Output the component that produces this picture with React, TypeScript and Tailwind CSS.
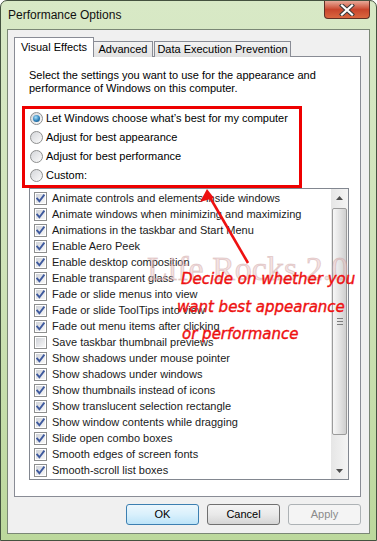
import React from 'react';

const effects: [string, boolean][] = [
  ['Animate controls and elements inside windows', true],
  ['Animate windows when minimizing and maximizing', true],
  ['Animations in the taskbar and Start Menu', true],
  ['Enable Aero Peek', true],
  ['Enable desktop composition', true],
  ['Enable transparent glass', true],
  ['Fade or slide menus into view', true],
  ['Fade or slide ToolTips into view', true],
  ['Fade out menu items after clicking', true],
  ['Save taskbar thumbnail previews', false],
  ['Show shadows under mouse pointer', true],
  ['Show shadows under windows', true],
  ['Show thumbnails instead of icons', true],
  ['Show translucent selection rectangle', true],
  ['Show window contents while dragging', true],
  ['Slide open combo boxes', true],
  ['Smooth edges of screen fonts', true],
  ['Smooth-scroll list boxes', true],
];

const radios = [
  'Let Windows choose what\u2019s best for my computer',
  'Adjust for best appearance',
  'Adjust for best performance',
  'Custom:',
];

const Checkbox = ({ checked }: { checked: boolean }) => (
  <span className="relative w-[13px] h-[13px] shrink-0 border border-[#8e8f8f] bg-white p-[1px]">
    <span className="block w-full h-full bg-gradient-to-br from-[#cfd2d8] to-[#f8f8f8]" />
    {checked && (
      <svg viewBox="0 0 11 11" className="absolute left-0 top-0 w-[11px] h-[11px]">
        <path d="M2.2 5.6 L4.4 8.2 L8.8 2.4" stroke="#3f5a9e" strokeWidth="1.9" fill="none" strokeLinecap="square" />
      </svg>
    )}
  </span>
);

const Radio = ({ selected }: { selected: boolean }) => (
  <span className="w-[13px] h-[13px] shrink-0 rounded-full border border-[#8e8f8f] bg-gradient-to-br from-[#d4d6da] to-[#fbfbfb] flex items-center justify-center">
    {selected && (
      <span className="w-[7px] h-[7px] rounded-full bg-[radial-gradient(circle_at_40%_35%,#a7e0fb,#2c7fb8_55%,#17466f)]" />
    )}
  </span>
);

const Scrollbar = () => (
  <div className="w-[17px] h-full flex flex-col bg-gradient-to-r from-[#e6e6e6] to-[#f4f4f4]">
    <div className="h-[17px] flex items-center justify-center">
      <svg width="7" height="4" viewBox="0 0 7 4"><path d="M0 4 L3.5 0 L7 4 Z" fill="#4d4d4d" /></svg>
    </div>
    <div className="mt-[2px] mx-[1px] h-[227px] rounded-[2px] border border-[#9b9b9b] bg-gradient-to-r from-[#f7f7f7] via-[#e4e4e4] to-[#cfcfcf] flex flex-col items-center justify-center gap-[2px]">
      <span className="w-[6px] h-[1px] bg-[#7d7d7d]" />
      <span className="w-[6px] h-[1px] bg-[#7d7d7d]" />
      <span className="w-[6px] h-[1px] bg-[#7d7d7d]" />
    </div>
    <div className="flex-1" />
    <div className="h-[17px] flex items-center justify-center">
      <svg width="7" height="4" viewBox="0 0 7 4"><path d="M0 0 L7 0 L3.5 4 Z" fill="#4d4d4d" /></svg>
    </div>
  </div>
);

export default function App() {
  return (
    <div className="relative w-[377px] h-[541px] overflow-hidden rounded-t-[7px] border border-[#44523f] bg-gradient-to-b from-[#d8e9c6] via-[#cfe3b8] to-[#bcd89c] font-['Liberation_Sans',Arial,sans-serif] text-[11px] text-black">
      {/* Title bar */}
      <div className="h-[28px] flex justify-between pl-[7px] pr-[6px]">
        <span className="pt-[7px] leading-[15px] text-[12px] text-[#111]">Performance Options</span>
        <button className="mt-0 w-[46px] h-[18px] rounded-b-[4px] border border-t-0 border-[#5e3026] bg-gradient-to-b from-[#e6a898] via-[#c8452c] to-[#d9663f] flex items-center justify-center">
          <svg width="16" height="12" viewBox="0 0 16 12">
            <path d="M3 1.5 L13 10.5 M13 1.5 L3 10.5" stroke="#3b3b3b" strokeWidth="4.2" strokeLinecap="square" />
            <path d="M3 1.5 L13 10.5 M13 1.5 L3 10.5" stroke="#ffffff" strokeWidth="2.2" strokeLinecap="square" />
          </svg>
        </button>
      </div>

      {/* Client area */}
      <div className="mx-[6px] h-[505px] border border-[#7a8775] bg-[#f0f0f0] pl-[6px] pr-[8px] pt-[7px]">
        {/* Tabs */}
        <div className="flex items-end h-[20px]">
          <div className="relative z-10 w-[80px] h-[20px] border border-b-0 border-[#898c95] bg-white flex items-center justify-center pb-[1px]">
            Visual Effects
          </div>
          <div className="w-[59px] h-[16px] border border-b-0 border-l-0 border-[#898c95] bg-gradient-to-b from-[#f3f3f3] to-[#e1e1e1] flex items-center justify-center">
            Advanced
          </div>
          <div className="ml-[1px] w-[137px] h-[16px] border border-b-0 border-[#898c95] bg-gradient-to-b from-[#f3f3f3] to-[#e1e1e1] flex items-center justify-center">
            Data Execution Prevention
          </div>
        </div>

        {/* Panel */}
        <div className="mt-[-1px] h-[441px] border border-[#898c95] bg-white pt-[12px] pl-[14px]">
          <p className="leading-[13px]">
            Select the settings you want to use for the appearance and
            <br />
            performance of Windows on this computer.
          </p>

          <div className="mt-[11px] ml-[-7px] w-[280px] h-[82px] border-[3px] border-[#ee0000] pl-[5px]">
            {radios.map((r, i) => (
              <div key={r} className="h-[19px] flex items-center gap-[3px]">
                <Radio selected={i === 0} />
                <span>{r}</span>
              </div>
            ))}
          </div>

          <div className="w-[320px] h-[292px] border border-[#828790] bg-white flex">
            <div className="flex-1 pt-[1px] pl-[4px]">
              {effects.map(([label, on]) => (
                <div key={label} className="h-[16px] flex items-center gap-[5px] text-[#1a1a1a]">
                  <Checkbox checked={on} />
                  <span className="whitespace-nowrap">{label}</span>
                </div>
              ))}
            </div>
            <Scrollbar />
          </div>
        </div>

        {/* Buttons */}
        <div className="mt-[7px] flex justify-end gap-[8px]">
          <button className="w-[73px] h-[21px] rounded-[3px] border border-[#3c7fb1] bg-gradient-to-b from-[#ecf7fd] via-[#d9f0fc] to-[#bde4f8] text-black">
            OK
          </button>
          <button className="w-[73px] h-[21px] rounded-[3px] border border-[#707070] bg-gradient-to-b from-[#f4f4f4] via-[#e9e9e9] to-[#d5d5d5] text-black">
            Cancel
          </button>
          <button className="w-[73px] h-[21px] rounded-[3px] border border-[#adb2b5] bg-[#f4f4f4] text-[#8b8b8b]">
            Apply
          </button>
        </div>
      </div>

      {/* Annotation overlay */}
      <div className="pointer-events-none absolute left-[146px] top-[251px] font-['Liberation_Serif',serif] text-[34px] leading-[34px] text-[#e9c6c6]/50 [-webkit-text-stroke:1px_rgba(190,140,140,0.35)] whitespace-nowrap">
        Life Rocks 2.0
      </div>
      <svg className="pointer-events-none absolute left-[189px] top-[182px]" width="66" height="86" viewBox="0 0 66 86">
        <path d="M18 11 L58 80" stroke="#ee1111" strokeWidth="2.6" fill="none" />
        <path d="M17 6 L10 19 L24 15 Z" fill="#ee1111" />
      </svg>
      <div className="pointer-events-none absolute left-[180px] top-[267px] font-['DejaVu_Sans',sans-serif] italic text-[15px] leading-[22px] text-[#ee1111] [-webkit-text-stroke:0.4px_#ee1111] whitespace-nowrap">
        Decide on whether you
      </div>
      <div className="pointer-events-none absolute left-[176px] top-[295px] font-['DejaVu_Sans',sans-serif] italic text-[15px] leading-[22px] text-[#ee1111] [-webkit-text-stroke:0.4px_#ee1111] whitespace-nowrap">
        want best appearance
      </div>
      <div className="pointer-events-none absolute left-[181px] top-[322px] font-['DejaVu_Sans',sans-serif] italic text-[15px] leading-[22px] text-[#ee1111] [-webkit-text-stroke:0.4px_#ee1111] whitespace-nowrap">
        or performance
      </div>
    </div>
  );
}
